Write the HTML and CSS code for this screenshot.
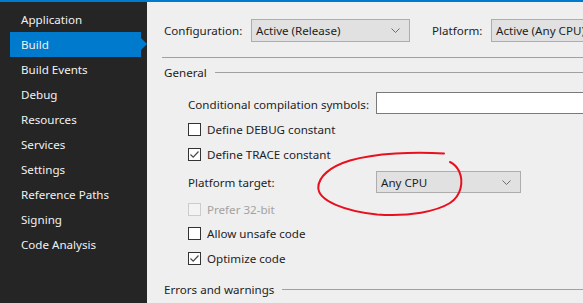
FILE: index.html
```html
<!DOCTYPE html>
<html lang="en">
<head>
    <meta charset="UTF-8">
    <title>Build</title>
    <link rel="stylesheet" href="styles.css">
</head>
<body>
<div class="accent-bar"></div>
<div class="layout">
    <nav class="sidebar">
        <div class="nav-item">Application</div>
        <div class="nav-item active">Build</div>
        <div class="nav-item">Build Events</div>
        <div class="nav-item">Debug</div>
        <div class="nav-item">Resources</div>
        <div class="nav-item">Services</div>
        <div class="nav-item">Settings</div>
        <div class="nav-item">Reference Paths</div>
        <div class="nav-item">Signing</div>
        <div class="nav-item">Code Analysis</div>
    </nav>

    <main class="page">
        <div class="config-row">
            <span class="config-label">Configuration:</span>
            <div class="select select-config">
                <span>Active (Release)</span>
                <svg class="chevron" width="9" height="5" viewBox="0 0 9 5"><path d="M0.5 0.5 L4.5 4.5 L8.5 0.5" fill="none" stroke="#6d6d6d" stroke-width="1"/></svg>
            </div>
            <span class="config-label platform-label">Platform:</span>
            <div class="select select-platform">
                <span>Active (Any CPU)</span>
            </div>
        </div>

        <div class="rule"></div>

        <div class="section-head">
            <span>General</span>
            <span class="section-line"></span>
        </div>

        <div class="form">
            <div class="row row-symbols">
                <span class="field-label">Conditional compilation symbols:</span>
                <div class="textbox"></div>
            </div>
            <div class="row">
                <span class="checkbox"></span>
                <span>Define DEBUG constant</span>
            </div>
            <div class="row">
                <span class="checkbox checked">
                    <svg width="11" height="11" viewBox="0 0 11 11"><path d="M1.5 5.5 L4.2 8.2 L9.5 2.5" fill="none" stroke="#4a4a4a" stroke-width="1.2"/></svg>
                </span>
                <span>Define TRACE constant</span>
            </div>
            <div class="row row-target">
                <span class="field-label">Platform target:</span>
                <div class="select select-target">
                    <span>Any CPU</span>
                    <svg class="chevron" width="9" height="5" viewBox="0 0 9 5"><path d="M0.5 0.5 L4.5 4.5 L8.5 0.5" fill="none" stroke="#6d6d6d" stroke-width="1"/></svg>
                </div>
            </div>
            <div class="row row-prefer disabled">
                <span class="checkbox"></span>
                <span>Prefer 32-bit</span>
            </div>
            <div class="row">
                <span class="checkbox"></span>
                <span>Allow unsafe code</span>
            </div>
            <div class="row">
                <span class="checkbox checked">
                    <svg width="11" height="11" viewBox="0 0 11 11"><path d="M1.5 5.5 L4.2 8.2 L9.5 2.5" fill="none" stroke="#4a4a4a" stroke-width="1.2"/></svg>
                </span>
                <span>Optimize code</span>
            </div>
        </div>

        <div class="section-head section-errors">
            <span>Errors and warnings</span>
            <span class="section-line"></span>
        </div>
    </main>
</div>

<!-- hand-drawn circle around the platform target -->
<svg class="scribble" width="583" height="303" viewBox="0 0 583 303">
    <path d="M444 153.5 C415 151.5 375 153 350 160.5 C330 166.5 318 177 318.3 188 C318.7 201 345 211 377 214.5 C410 217 437 211 450 203 C461 196 464 182 459 171 C457 167 454 164 450 162" fill="none" stroke="#e8101e" stroke-width="2" stroke-linecap="round"/>
</svg>
</body>
</html>
```

FILE: styles.css
```css
* {
    margin: 0;
    padding: 0;
    box-sizing: border-box;
}

html,
body {
    width: 100%;
    height: 100%;
    overflow: hidden;
}

body {
    font-family: "Segoe UI", "Noto Sans", sans-serif;
    font-size: 11.6px;
    color: #1e1e1e;
    background: #efefef;
    display: flex;
    flex-direction: column;
    white-space: nowrap;
}

.accent-bar {
    height: 2px;
    background: #007acc;
}

.layout {
    flex: 1;
    display: flex;
}

.sidebar {
    width: 147px;
    background: #252526;
    padding-top: 5px;
}

.nav-item {
    position: relative;
    height: 25px;
    line-height: 25px;
    margin-left: 10px;
    width: 131px;
    padding-left: 11px;
    color: #f1f1f1;
}

.nav-item.active {
    background: #007acc;
}

.nav-item.active::after {
    content: "";
    position: absolute;
    right: -6px;
    top: 6px;
    border-left: 6px solid #007acc;
    border-top: 6px solid transparent;
    border-bottom: 6px solid transparent;
}

.page {
    flex: 1;
    min-width: 0;
    padding: 17px 0 0 15px;
}

.config-row {
    display: flex;
    align-items: center;
    height: 23px;
    padding-left: 2px;
}

.config-label {
    width: 87px;
    flex-shrink: 0;
}

.platform-label {
    width: 59px;
    margin-left: 22px;
}

.select {
    height: 23px;
    display: flex;
    align-items: center;
    justify-content: space-between;
    padding: 0 9px 0 4px;
    background: #e1e1e1;
    border: 1px solid #adadad;
    flex-shrink: 0;
    overflow: hidden;
}

.select-config {
    width: 159px;
}

.select-platform {
    flex: 1 0 92px;
    border-right: none;
}

.select-target {
    width: 145px;
    height: 22px;
}

.rule {
    height: 1px;
    background: #a0a0a0;
    margin-top: 15px;
}

.section-head {
    display: flex;
    align-items: center;
    gap: 8px;
    height: 16px;
    margin-top: 6px;
    padding-left: 2px;
}

.section-line {
    flex: 1;
    height: 1px;
    background: #a0a0a0;
}

.section-errors {
    margin-top: 10px;
}

.form {
    padding: 11px 0 0 26px;
}

.row {
    display: flex;
    align-items: center;
    gap: 6px;
    height: 25px;
}

.row-symbols {
    height: 26px;
    gap: 0;
}

.row-symbols .textbox {
    align-self: flex-start;
    margin-top: 1px;
}

.row-target {
    height: 30px;
    gap: 0;
}

.row-prefer {
    height: 24px;
}

.field-label {
    width: 188px;
    flex-shrink: 0;
}

.textbox {
    flex: 1;
    height: 22px;
    background: #ffffff;
    border: 1px solid #7a7a7a;
    border-right: none;
}

.checkbox {
    width: 13px;
    height: 13px;
    background: #ffffff;
    border: 1px solid #333333;
    display: flex;
    align-items: center;
    justify-content: center;
}

.disabled {
    color: #a2a2a2;
}

.disabled .checkbox {
    border-color: #cccccc;
    background: #f3f3f3;
}

.scribble {
    position: absolute;
    left: 0;
    top: 0;
    pointer-events: none;
}
```
